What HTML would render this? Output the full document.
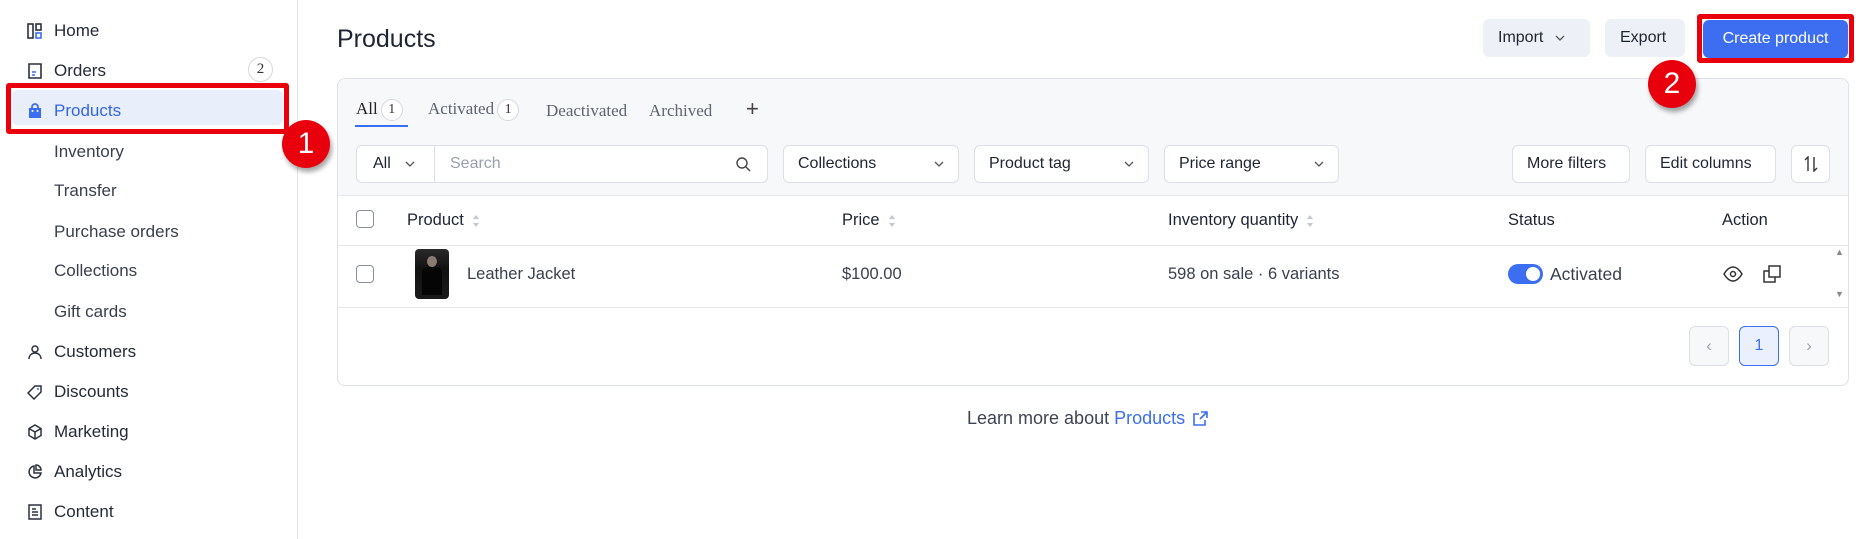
<!DOCTYPE html>
<html><head><meta charset="utf-8"><style>
*{box-sizing:border-box;margin:0;padding:0}
body{width:1876px;height:539px;background:#fff;font-family:"Liberation Sans",sans-serif;color:#1f2433;position:relative;overflow:hidden}
.a{position:absolute}
.side{left:0;top:0;width:298px;height:539px;border-right:1px solid #e3e5ea;background:#fff}
.ni{position:absolute;left:54px;font-size:17px;color:#252a37;line-height:20px}
.ic{position:absolute;left:27px;width:16px;height:16px}
.btn{position:absolute;border:1px solid #dcdfe6;border-radius:6px;background:#fff;font-size:16px;display:flex;align-items:center;padding:0 14px;color:#1f2433}
.th{position:absolute;top:211px;font-size:16.5px;color:#1f2433}
.cb{position:absolute;left:356px;width:18px;height:18px;border:1.5px solid #8a8f9c;border-radius:4px;background:#fff}
.sort{display:inline-block;vertical-align:middle;margin-left:8px;width:8px;height:14px}
.pg{position:absolute;top:326px;width:40px;height:40px;border:1px solid #dcdfe6;border-radius:6px;background:#f7f8fa;display:flex;align-items:center;justify-content:center;color:#a0a4ae;font-size:17px}
.badge{position:absolute;width:48px;height:48px;border-radius:50%;background:#e8000d;color:#fff;font-size:30px;display:flex;align-items:center;justify-content:center;box-shadow:2px 4px 5px rgba(0,0,0,.35);z-index:5}
.tab{position:absolute;top:99px;font-family:"Liberation Serif",serif;font-size:17px;color:#5e6470}
.tc{display:inline-block;width:22px;height:22px;border:1px solid #d5d8de;border-radius:50%;text-align:center;line-height:20px;font-size:14px;background:#fff;color:#333;margin-left:3px;vertical-align:middle}
.rt{position:absolute;top:265px;font-size:16.5px;color:#3a3f4c}
</style></head><body>

<div class="a side"></div>
<!-- sidebar -->
<svg class="ic" style="top:23px" viewBox="0 0 16 16" fill="none" stroke="#2b3040" stroke-width="1.6"><rect x="1" y="1" width="5" height="14"/><rect x="9" y="1" width="5" height="6"/><rect x="9" y="10" width="5" height="5" stroke="#3b6ef0"/></svg>
<div class="ni" style="top:21px">Home</div>
<svg class="ic" style="top:63px" viewBox="0 0 16 16" fill="none" stroke="#2b3040" stroke-width="1.6"><path d="M2 1h12v14H2z"/><path d="M5 9h4M5 12h3" stroke="#3b6ef0"/></svg>
<div class="ni" style="top:61px">Orders</div>
<div class="a" style="left:248px;top:57px;width:25px;height:25px;border:1px solid #d5d8de;border-radius:50%;text-align:center;line-height:23px;font-family:'Liberation Serif',serif;font-size:15px;color:#333">2</div>

<div class="a" style="left:6px;top:83px;width:283px;height:51px;border:5px solid #e8000d;border-radius:3px;background:#fff"></div>
<div class="a" style="left:12px;top:90px;width:271px;height:35px;background:#e9eefb;border-radius:6px"></div>
<svg class="ic" style="top:103px" viewBox="0 0 16 16"><path d="M2 5h12v10H2z" fill="#3b6ef0"/><path d="M5 6V4a3 3 0 0 1 6 0v2" fill="none" stroke="#3b6ef0" stroke-width="1.8"/><circle cx="5.5" cy="8" r="1" fill="#fff"/><circle cx="10.5" cy="8" r="1" fill="#fff"/></svg>
<div class="ni" style="top:101px;color:#3366e6">Products</div>
<div class="badge" style="left:282px;top:120px">1</div>

<div class="ni" style="top:142px;color:#3a3f4c">Inventory</div>
<div class="ni" style="top:181px;color:#3a3f4c">Transfer</div>
<div class="ni" style="top:222px;color:#3a3f4c">Purchase orders</div>
<div class="ni" style="top:261px;color:#3a3f4c">Collections</div>
<div class="ni" style="top:302px;color:#3a3f4c">Gift cards</div>

<svg class="ic" style="top:344px" viewBox="0 0 16 16" fill="none" stroke="#2b3040" stroke-width="1.5"><circle cx="8" cy="5" r="3"/><path d="M2 15c0-4 3-6 6-6s6 2 6 6"/></svg>
<div class="ni" style="top:342px">Customers</div>
<svg class="ic" style="top:384px" viewBox="0 0 16 16" fill="none" stroke="#2b3040" stroke-width="1.5"><path d="M1 9l7-7h6v6l-7 7z"/><circle cx="11" cy="5" r="1" fill="#3b6ef0" stroke="none"/></svg>
<div class="ni" style="top:382px">Discounts</div>
<svg class="ic" style="top:424px" viewBox="0 0 16 16" fill="none" stroke="#2b3040" stroke-width="1.5"><path d="M8 1l6 3.5v7L8 15l-6-3.5v-7z M2 4.5L8 8l6-3.5M8 8v7"/></svg>
<div class="ni" style="top:422px">Marketing</div>
<svg class="ic" style="top:464px" viewBox="0 0 16 16" fill="none" stroke="#2b3040" stroke-width="1.5"><path d="M7 2a6 6 0 1 0 7 7H7z"/><path d="M9 1v5h5a5 5 0 0 0-5-5z"/></svg>
<div class="ni" style="top:462px">Analytics</div>
<svg class="ic" style="top:504px" viewBox="0 0 16 16" fill="none" stroke="#2b3040" stroke-width="1.5"><path d="M2 1h12v14H2z M5 5h4M5 8h6M5 11h6"/></svg>
<div class="ni" style="top:502px">Content</div>

<!-- header -->
<div class="a" style="left:337px;top:25px;font-size:25px;color:#1f2433">Products</div>
<div class="btn" style="left:1483px;top:19px;width:107px;height:38px;background:#edf0f6;border-color:#edf0f6">Import <svg style="margin-left:12px" width="10" height="6" viewBox="0 0 10 6"><path d="M1 1l4 4 4-4" fill="none" stroke="#555" stroke-width="1.3"/></svg></div>
<div class="btn" style="left:1605px;top:19px;width:80px;height:38px;background:#edf0f6;border-color:#edf0f6">Export</div>
<div class="a" style="left:1697px;top:14px;width:157px;height:49px;border:5px solid #e8000d;border-radius:3px"></div>
<div class="btn" style="left:1703px;top:20px;width:145px;height:38px;background:#3d6ef2;border-color:#3d6ef2;color:#fff;justify-content:center;padding:0">Create product</div>

<!-- card -->
<div class="a" style="left:337px;top:78px;width:1512px;height:308px;border:1px solid #dfe2e8;border-radius:8px;background:#fff;overflow:hidden">
  <div style="height:117px;background:#f7f8fa;border-bottom:1px solid #e6e8ec"></div>
  <div style="position:absolute;top:166px;left:0;right:0;border-top:1px solid #e6e8ec"></div>
  <div style="position:absolute;top:228px;left:0;right:0;border-top:1px solid #e6e8ec"></div>
</div>
<div class="badge" style="left:1648px;top:60px">2</div>
<div class="tab" style="left:356px;color:#222">All<span class="tc">1</span></div>
<div class="a" style="left:355px;top:125px;width:53px;height:2px;background:#3b6ef0"></div>
<div class="tab" style="left:428px">Activated<span class="tc">1</span></div>
<div class="tab" style="left:546px;top:101px">Deactivated</div>
<div class="tab" style="left:649px;top:101px">Archived</div>
<div class="a" style="left:746px;top:96px;font-size:22px;color:#444">+</div>

<div class="btn" style="left:356px;top:145px;width:412px;height:38px;padding:0"><span style="width:78px;padding-left:16px;border-right:1px solid #dcdfe6;height:100%;display:flex;align-items:center">All <svg style="margin-left:14px" width="10" height="6" viewBox="0 0 10 6"><path d="M1 1l4 4 4-4" fill="none" stroke="#555" stroke-width="1.3"/></svg></span><span style="color:#9aa0ab;padding-left:15px;flex:1">Search</span><svg style="margin-right:16px" width="16" height="16" viewBox="0 0 16 16" fill="none" stroke="#444" stroke-width="1.4"><circle cx="7" cy="7" r="5"/><path d="M11 11l4 4"/></svg></div>
<div class="btn" style="left:783px;top:145px;width:176px;height:38px;justify-content:space-between">Collections<svg width="10" height="6" viewBox="0 0 10 6"><path d="M1 1l4 4 4-4" fill="none" stroke="#555" stroke-width="1.3"/></svg></div>
<div class="btn" style="left:974px;top:145px;width:175px;height:38px;justify-content:space-between">Product tag<svg width="10" height="6" viewBox="0 0 10 6"><path d="M1 1l4 4 4-4" fill="none" stroke="#555" stroke-width="1.3"/></svg></div>
<div class="btn" style="left:1164px;top:145px;width:175px;height:38px;justify-content:space-between">Price range<svg width="10" height="6" viewBox="0 0 10 6"><path d="M1 1l4 4 4-4" fill="none" stroke="#555" stroke-width="1.3"/></svg></div>
<div class="btn" style="left:1512px;top:145px;width:118px;height:38px">More filters</div>
<div class="btn" style="left:1645px;top:145px;width:131px;height:38px">Edit columns</div>
<div class="btn" style="left:1791px;top:145px;width:39px;height:38px;padding:0;justify-content:center"><svg width="16" height="16" viewBox="0 0 16 16" fill="none" stroke="#333" stroke-width="1.4"><path d="M5 15V1L2 4M11 1v14l3-3"/></svg></div>

<!-- table header -->
<div class="cb" style="top:210px"></div>
<svg width="0" height="0"><defs><g id="s"><path d="M4 1l3 4H1z" fill="#c3c7cf"/><path d="M4 13l3-4H1z" fill="#c3c7cf"/></g></defs></svg>
<div class="th" style="left:407px">Product<svg class="sort" viewBox="0 0 8 14"><use href="#s"/></svg></div>
<div class="th" style="left:842px">Price<svg class="sort" viewBox="0 0 8 14"><use href="#s"/></svg></div>
<div class="th" style="left:1168px">Inventory quantity<svg class="sort" viewBox="0 0 8 14"><use href="#s"/></svg></div>
<div class="th" style="left:1508px">Status</div>
<div class="th" style="left:1722px">Action</div>

<!-- row -->
<div class="cb" style="top:265px"></div>
<div class="a" style="left:415px;top:249px;width:34px;height:50px;border-radius:4px;background:linear-gradient(180deg,#2a2a2a,#111 40%,#1a1a1a)"><div style="position:absolute;left:12px;top:7px;width:10px;height:11px;border-radius:50%;background:#8a7a70"></div><div style="position:absolute;left:7px;top:18px;width:20px;height:28px;background:#050505;border-radius:5px 5px 0 0"></div></div>
<div class="rt" style="left:467px">Leather Jacket</div>
<div class="rt" style="left:842px">$100.00</div>
<div class="rt" style="left:1168px">598 on sale · 6 variants</div>
<div class="a" style="left:1508px;top:264px;width:35px;height:20px;border-radius:10px;background:#3b6ef0"><div style="position:absolute;right:3px;top:3px;width:14px;height:14px;border-radius:50%;background:#fff"></div></div>
<div class="a" style="left:1550px;top:264px;font-size:17.5px;color:#3a3f4c">Activated</div>
<svg class="a" style="left:1723px;top:266px" width="20" height="16" viewBox="0 0 20 16" fill="none" stroke="#333" stroke-width="1.5"><path d="M1 8c3-5 6-7 9-7s6 2 9 7c-3 5-6 7-9 7S4 13 1 8z"/><circle cx="10" cy="8" r="2.5"/></svg>
<svg class="a" style="left:1763px;top:265px" width="18" height="18" viewBox="0 0 18 18" fill="none" stroke="#333" stroke-width="1.5"><path d="M6 1h11v11H6z"/><path d="M6 6H1v11h11v-5"/></svg>
<div class="a" style="left:1835px;top:247px;font-size:9px;color:#888">▲</div>
<div class="a" style="left:1835px;top:289px;font-size:9px;color:#888">▼</div>

<!-- pagination -->
<div class="pg" style="left:1689px">‹</div>
<div class="pg" style="left:1739px;background:#eaf0fd;border-color:#3b6ef0;color:#3b6ef0;font-size:16px">1</div>
<div class="pg" style="left:1789px">›</div>

<!-- footer -->
<div class="a" style="left:967px;top:408px;font-size:18px;color:#3f4452">Learn more about <span style="color:#3b6ef0">Products</span> <svg style="vertical-align:-2px;margin-left:3px" width="15" height="15" viewBox="0 0 15 15" fill="none" stroke="#3b6ef0" stroke-width="1.6"><path d="M12 9v5H1V3h5M8 1h6v6M14 1L7 8"/></svg></div>
</body></html>
